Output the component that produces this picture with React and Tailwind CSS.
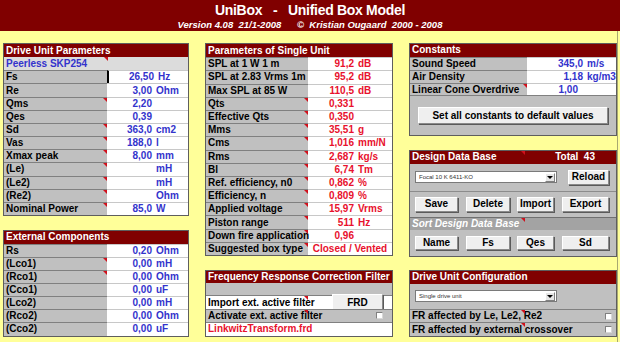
import React from 'react';

const BLUE = 'text-[#3333cc]';
const RED = 'text-[#e8112d]';

// excel comment marker
const Mark = ({ className = 'right-0' }) => (
  <span className={`absolute top-0 w-0 h-0 border-l-[4px] border-l-transparent border-t-[4px] border-t-[#d0101c] ${className}`} />
);

const Btn = ({ children, className = '' }) => (
  <div className={`flex items-center justify-center shrink-0 bg-[#efefef] border border-t-white border-l-white border-r-[#8a8a8a] border-b-[#8a8a8a] shadow-[1px_1px_0_#5a5a5a] text-black ${className}`}>
    {children}
  </div>
);

const Check = () => <span className="w-[7px] h-[7px] bg-white border border-t-[#808080] border-l-[#808080] border-r-[#d8d8d8] border-b-[#d8d8d8]" />;

const Combo = ({ text }) => (
  <div className="w-[142px] h-[12px] bg-white border border-[#7a7a7a] flex items-center shrink-0">
    <span className="flex-1 pl-[3px] text-[6px] font-normal text-[#333] whitespace-nowrap">{text}</span>
    <div className="w-[10px] h-[9px] mr-[1px] bg-[#e6e6e6] border border-t-white border-l-white border-r-[#808080] border-b-[#808080] flex items-center justify-center">
      <span className="w-0 h-0 border-l-[3px] border-r-[3px] border-t-[3px] border-l-transparent border-r-transparent border-t-black" />
    </div>
  </div>
);

const Panel = ({ title, right, className = '', children }) => (
  <div className={`flex flex-col border border-[#5e5e5e] ${className}`}>
    <div className="relative flex-1 min-h-0 flex items-center justify-between bg-[#800000] text-white pl-[2px] whitespace-nowrap">
      <span>{title}</span>
      {right}
    </div>
    {children}
  </div>
);

const Row = ({ label, num, unit, mark, color = BLUE, lw, nw, sel, center }) => (
  <div className="flex flex-1 min-h-0">
    <div className={`relative ${lw} shrink-0 bg-[#c0c0c0] border-t border-[#808080] pl-[2px] flex items-center whitespace-nowrap text-black`}>
      {label}
      {mark && <Mark />}
    </div>
    <div className={`flex-1 bg-white border-t border-[#c8c8c8] flex items-center whitespace-nowrap ${color} ${sel ? 'border-l-2 border-l-black' : ''}`}>
      {center ? (
        <span className="flex-1 text-center">{num}</span>
      ) : (
        <>
          <span className={`${nw} text-right shrink-0`}>{num}</span>
          <span className="pl-[4px]">{unit}</span>
        </>
      )}
    </div>
  </div>
);

const driveRows = [
  ['Fs', '26,50', 'Hz', false, true],
  ['Re', '3,00', 'Ohm'],
  ['Qms', '2,20', '', true],
  ['Qes', '0,39', ''],
  ['Sd', '363,0', 'cm2', true],
  ['Vas', '188,0', 'l', true],
  ['Xmax peak', '8,00', 'mm', true],
  ['(Le)', '', 'mH', true],
  ['(Le2)', '', 'mH', true],
  ['(Re2)', '', 'Ohm', true],
  ['Nominal Power', '85,0', 'W', true],
];

const extRows = [
  ['Rs', '0,20', 'Ohm'],
  ['(Lco1)', '0,00', 'mH', true],
  ['(Rco1)', '0,00', 'Ohm', true],
  ['(Cco1)', '0,00', 'uF'],
  ['(Lco2)', '0,00', 'mH'],
  ['(Rco2)', '0,00', 'Ohm'],
  ['(Cco2)', '0,00', 'uF'],
];

const singleRows = [
  ['SPL at 1 W 1 m', '91,2', 'dB'],
  ['SPL at 2.83 Vrms 1m', '95,2', 'dB'],
  ['Max SPL at 85 W', '110,5', 'dB'],
  ['Qts', '0,331', '', true],
  ['Effective Qts', '0,350', '', true],
  ['Mms', '35,51', 'g', true],
  ['Cms', '1,016', 'mm/N', true],
  ['Rms', '2,687', 'kg/s', true],
  ['Bl', '6,74', 'Tm', true],
  ['Ref. efficiency, n0', '0,862', '%', true],
  ['Efficiency, n', '0,809', '%', true],
  ['Applied voltage', '15,97', 'Vrms', true],
  ['Piston range', '511', 'Hz', true],
  ['Down fire application', '0,96', '', true],
];

export default function App() {
  return (
    <div className="w-[620px] h-[342px] overflow-hidden bg-[#ffff99] font-['Liberation_Sans',Arial,sans-serif] text-[10px] font-bold leading-none">
      <header className="h-[31px] bg-[#800000] text-white text-center pt-[2px]">
        <div className="text-[14px] leading-[16px] tracking-[-0.3px] whitespace-pre">UniBox   -   Unified Box Model</div>
        <div className="mt-[1px] text-[9.5px] leading-[11px] italic whitespace-pre">
          Version 4.08  21/1-2008      ©  Kristian Ougaard  2000 - 2008
        </div>
      </header>

      <div className="w-[618px] h-[311px] border-r border-[#a8a870] flex gap-[16px] pl-[3px] pt-[12px]">
        {/* column 1 */}
        <div className="w-[186px] shrink-0 flex flex-col gap-[13.5px]">
          <Panel title="Drive Unit Parameters" className="h-[173px]">
            <div className="relative flex-1 min-h-0 bg-[#dcdcdc] flex items-center pl-[2px] text-[#3333cc]">
              Peerless SKP254
              <Mark className="left-[100px]" />
            </div>
            {driveRows.map(([l, n, u, m, s]) => (
              <Row key={l} label={l} num={n} unit={u} mark={m} sel={s} lw="w-[103px]" nw="w-[45px]" />
            ))}
          </Panel>
          <Panel title="External Components" className="h-[107px]">
            {extRows.map(([l, n, u, m]) => (
              <Row key={l} label={l} num={n} unit={u} mark={m} lw="w-[103px]" nw="w-[45px]" />
            ))}
          </Panel>
        </div>

        {/* column 2 */}
        <div className="w-[188px] shrink-0 flex flex-col gap-[13.5px]">
          <Panel title="Parameters of Single Unit" className="h-[213px]">
            {singleRows.map(([l, n, u, m]) => (
              <Row key={l} label={l} num={n} unit={u} mark={m} color={RED} lw="w-[102px]" nw="w-[46px]" />
            ))}
            <Row label="Suggested box type" num="Closed / Vented" mark color={RED} lw="w-[102px]" center />
          </Panel>
          <Panel title="Frequency Response Correction Filter" className="h-[67px]">
            <div className="flex-1 min-h-0 bg-[#c0c0c0]" />
            <div className="relative flex-1 min-h-0 flex items-center bg-white border-t border-[#808080]">
              <span className="w-[126px] shrink-0 pl-[2px] whitespace-nowrap">Import ext. active filter</span>
              <Btn className="w-[51px] h-[17px]">FRD</Btn>
              <Mark className="left-[98px]" />
            </div>
            <div className="relative flex-1 min-h-0 flex items-center justify-between bg-[#c0c0c0] border-t border-[#808080] pl-[2px] pr-[9px]">
              <span className="whitespace-nowrap">Activate ext. active filter</span>
              <Check />
              <Mark className="left-[98px]" />
            </div>
            <div className={`flex-1 min-h-0 flex items-center bg-white border-t border-[#808080] pl-[2px] ${RED}`}>
              LinkwitzTransform.frd
            </div>
          </Panel>
        </div>

        {/* column 3 */}
        <div className="w-[208px] shrink-0 flex flex-col gap-[13.5px]">
          <Panel title="Constants" className="h-[93px]">
            <Row label="Sound Speed" num="345,0" unit="m/s" lw="w-[117px]" nw="w-[56px]" />
            <Row label="Air Density" num="1,18" unit="kg/m3" lw="w-[117px]" nw="w-[56px]" />
            <Row label="Linear Cone Overdrive" num="1,00" mark lw="w-[117px]" nw="w-[51px]" />
            <div className="flex-[3] min-h-0 bg-[#c0c0c0] border-t border-[#808080] flex items-center justify-center">
              <Btn className="w-[190px] h-[17px]">Set all constants to default values</Btn>
            </div>
          </Panel>

          <Panel
            title="Design Data Base"
            className="h-[107px]"
            right={
              <>
                <span className="whitespace-pre mr-[21px]">Total  43</span>
                <Mark className="left-[111px]" />
              </>
            }
          >
            <div className="flex-[7] min-h-0 bg-[#c0c0c0] flex flex-col">
              <div className="h-[27px] flex items-center pl-[5px]">
                <Combo text="Focal 10 K 6411-KO" />
                <Btn className="ml-[11px] w-[41px] h-[15px]">Reload</Btn>
              </div>
              <div className="h-[26px] border-t border-[#8c8c8c] flex items-center pl-[5px]">
                <Btn className="w-[43px] h-[15px]">Save</Btn>
                <Btn className="ml-[8px] w-[44px] h-[15px]">Delete</Btn>
                <Btn className="ml-[7px] w-[37px] h-[15px]">Import</Btn>
                <Btn className="ml-[8px] w-[47px] h-[15px]">Export</Btn>
              </div>
              <div className="relative h-[13px] bg-[#a3a3a3] border-t border-[#707070] text-white italic flex items-center pl-[2px]">
                Sort Design Data Base
                <Mark className="left-[111px]" />
              </div>
              <div className="flex-1 flex items-center pl-[5px]">
                <Btn className="w-[43px] h-[14px]">Name</Btn>
                <Btn className="ml-[8px] w-[44px] h-[14px]">Fs</Btn>
                <Btn className="ml-[7px] w-[37px] h-[14px]">Qes</Btn>
                <Btn className="ml-[8px] w-[47px] h-[14px]">Sd</Btn>
              </div>
            </div>
          </Panel>

          <Panel title="Drive Unit Configuration" className="h-[67px]">
            <div className="flex-[2] min-h-0 bg-[#c0c0c0] flex items-center pl-[5px]">
              <Combo text="Single drive unit" />
            </div>
            {['FR affected by Le, Le2, Re2', 'FR affected by external crossover'].map((t) => (
              <div key={t} className="relative flex-1 min-h-0 flex items-center justify-between bg-[#c0c0c0] border-t border-[#808080] pl-[2px] pr-[4px]">
                <span className="whitespace-nowrap">{t}</span>
                <Check />
                <Mark className="left-[111px]" />
              </div>
            ))}
          </Panel>
        </div>
      </div>
    </div>
  );
}
